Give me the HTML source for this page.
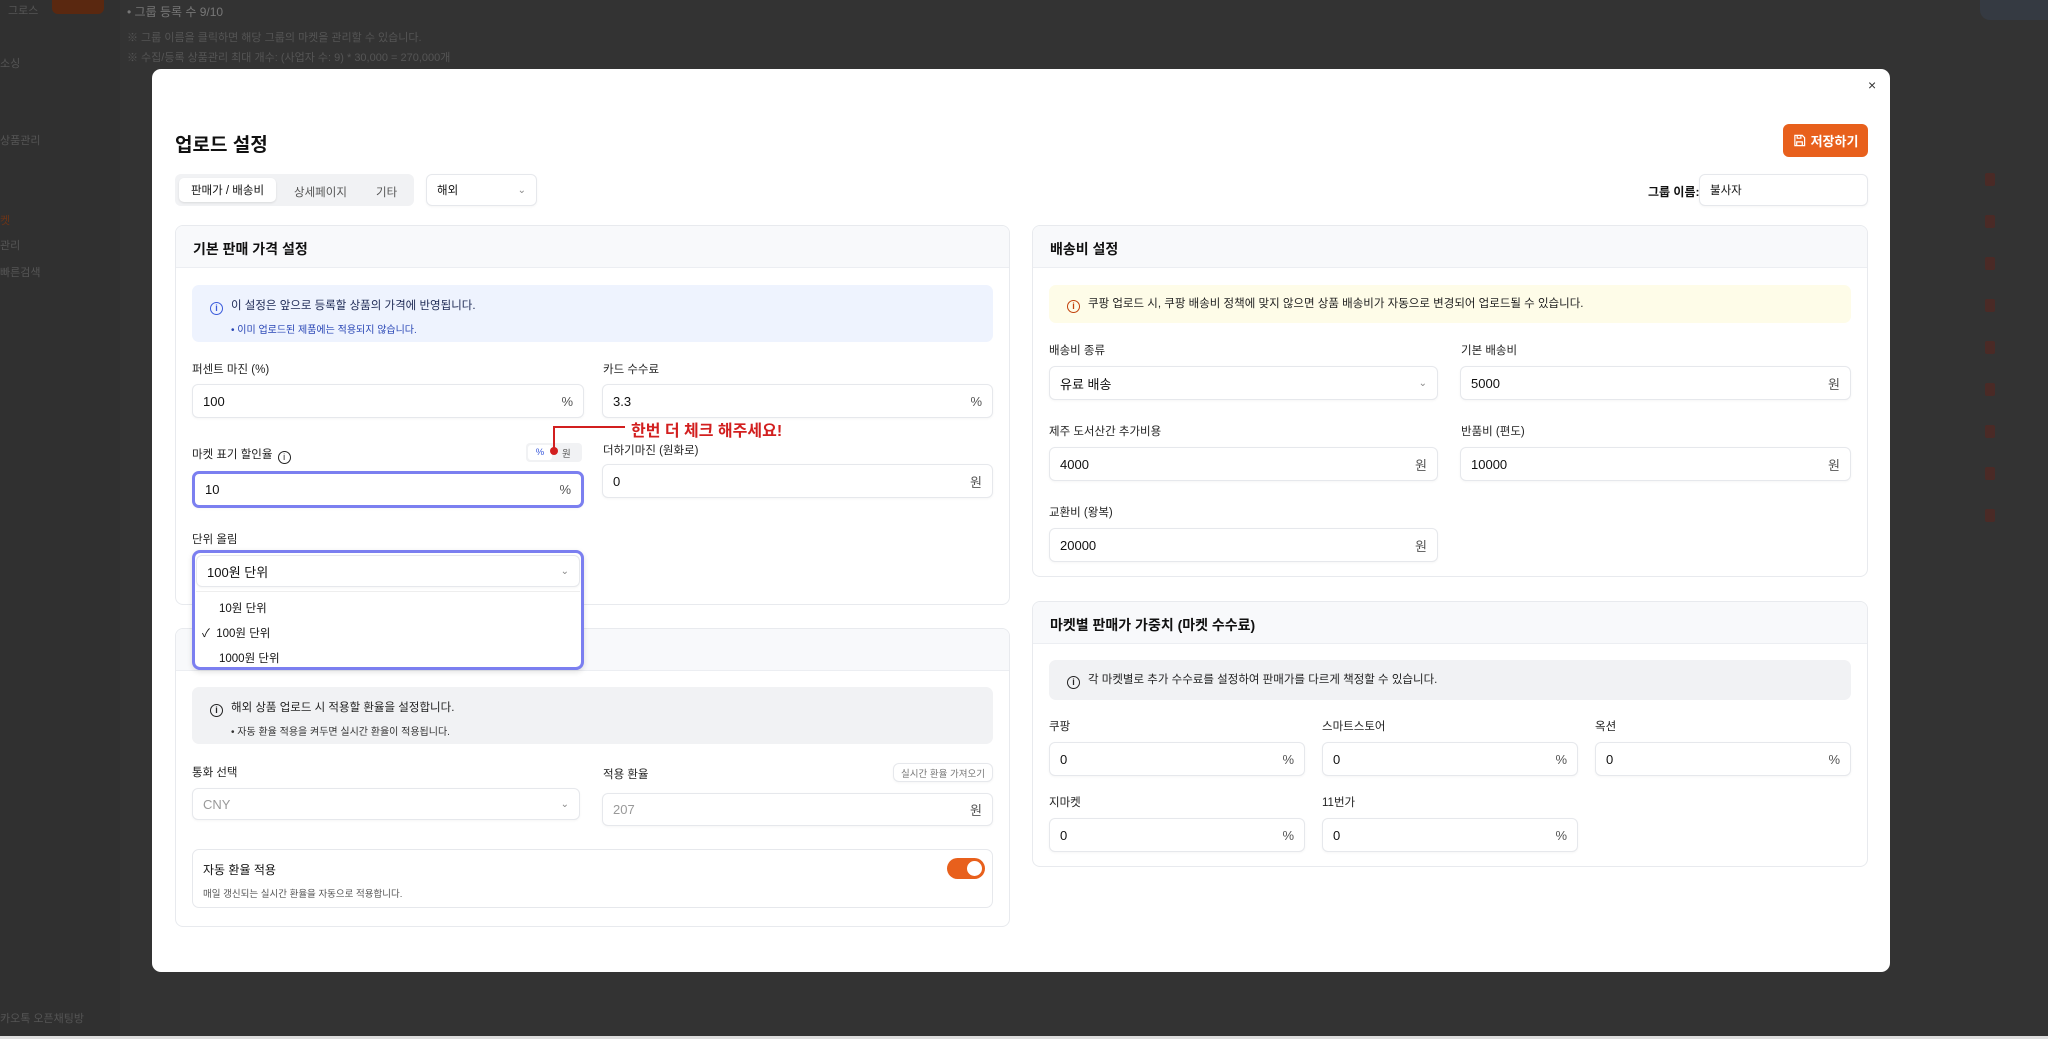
<!DOCTYPE html>
<html><head><meta charset="utf-8"><style>
*{box-sizing:border-box;margin:0;padding:0}
body{width:2048px;height:1039px;overflow:hidden;background:#333;font-family:"Liberation Sans","Noto Sans CJK KR",sans-serif;color:#111;position:relative}
.a{position:absolute}
.bgt{position:absolute;color:#555;font-size:11px}
.modal{left:152px;top:69px;width:1738px;height:903px;background:#fff;border-radius:9px}
.card{position:absolute;background:#fff;border:1px solid #e8eaee;border-radius:8px;overflow:hidden}
.card .hd{height:42px;background:#f8f9fb;border-bottom:1px solid #eceef2;font-size:14px;font-weight:bold;padding:13px 17px}
.inp{position:absolute;border:1px solid #e6e8ec;border-radius:6px;background:#fff;font-size:13px;padding:0 10px;display:flex;align-items:center;justify-content:space-between;box-shadow:0 1px 2px rgba(0,0,0,.04)}
.inp .u{color:#555;font-size:13px}
.lb{position:absolute;font-size:11.5px;color:#222}
.info{position:absolute;border-radius:7px;font-size:11.5px;padding:0 18px}
.ic{display:inline-block;width:13px;height:13px;border:1.3px solid currentColor;border-radius:50%;font-size:9px;line-height:10px;text-align:center;margin-right:8px;vertical-align:-2px;font-weight:bold}
.chev{color:#888;font-size:10px}
.tr{position:absolute;left:1985px;width:10px;height:13px;background:#4a2a26;border-radius:2px}
</style></head><body>
<div class="a" style="left:0;top:0;width:120px;height:1039px;background:#303030"></div>
<div class="bgt" style="left:8px;top:2px">그로스</div>
<div class="a" style="left:52px;top:0;width:52px;height:14px;background:#5a2810;border-radius:0 0 6px 6px"></div>
<div class="bgt" style="left:0;top:55px">소싱</div>
<div class="bgt" style="left:0;top:132px">상품관리</div>
<div class="bgt" style="left:0;top:212px;color:#6a3418">켓</div>
<div class="bgt" style="left:0;top:237px">관리</div>
<div class="bgt" style="left:0;top:264px">빠른검색</div>
<div class="bgt" style="left:0;top:1010px">카오톡 오픈채팅방</div>
<div class="bgt" style="left:127px;top:3px;color:#777;font-size:12px">• 그룹 등록 수 9/10</div>
<div class="bgt" style="left:127px;top:29px">※ 그룹 이름을 클릭하면 해당 그룹의 마켓을 관리할 수 있습니다.</div>
<div class="bgt" style="left:127px;top:49px">※ 수집/등록 상품관리 최대 개수: (사업자 수: 9) * 30,000 = 270,000개</div>
<div class="a" style="left:1980px;top:0;width:68px;height:20px;background:#353a42;border-radius:0 0 0 10px"></div>
<div class="a" style="left:0;top:1036px;width:2048px;height:3px;background:#ddd"></div>
<div class="tr" style="top:173px"></div><div class="tr" style="top:215px"></div><div class="tr" style="top:257px"></div><div class="tr" style="top:299px"></div><div class="tr" style="top:341px"></div><div class="tr" style="top:383px"></div><div class="tr" style="top:425px"></div><div class="tr" style="top:467px"></div><div class="tr" style="top:509px"></div>

<div class="a modal">
<div class="a" style="left:1716px;top:8px;font-size:14px;color:#333">×</div>
<div class="a" style="left:23px;top:61px;font-size:19px;font-weight:bold">업로드 설정</div>
<div class="a" style="left:1631px;top:55px;width:85px;height:33px;background:#e8601c;border-radius:6px;color:#fff;font-size:13px;font-weight:bold;display:flex;align-items:center;justify-content:center"><svg width="13" height="13" viewBox="0 0 14 14" style="margin-right:5px"><path d="M2 1.5h8l2.5 2.5v8.5h-10.5z M4.5 1.5v3h4v-3 M4 12.5v-4h6v4" fill="none" stroke="#fff" stroke-width="1.3"/></svg>저장하기</div>
<div class="a" style="left:23px;top:105px;width:239px;height:32px;background:#f1f2f4;border-radius:6px"></div>
<div class="a" style="left:27px;top:109px;width:97px;height:24px;background:#fff;border-radius:5px;box-shadow:0 1px 2px rgba(0,0,0,.1);font-size:11.5px;display:flex;align-items:center;justify-content:center">판매가 / 배송비</div>
<div class="a" style="left:142px;top:115px;font-size:11.5px;color:#555">상세페이지</div>
<div class="a" style="left:224px;top:115px;font-size:11.5px;color:#555">기타</div>
<div class="inp" style="left:274px;top:105px;width:111px;height:32px;font-size:11.5px"><span>해외</span><span class="chev">⌄</span></div>
<div class="a" style="left:1496px;top:114px;font-size:12px;font-weight:bold">그룹 이름:</div>
<div class="inp" style="left:1547px;top:105px;width:169px;height:32px;font-size:11.5px">불사자</div>
</div>

<div class="card" style="left:175px;top:225px;width:835px;height:380px"><div class="hd">기본 판매 가격 설정</div></div>
<div class="info" style="left:192px;top:285px;width:801px;height:57px;background:#eef3fe;color:#1e2a55;padding-top:12px"><span class="ic" style="color:#3b5bdb">i</span>이 설정은 앞으로 등록할 상품의 가격에 반영됩니다.<div style="font-size:10px;color:#2845b5;margin:6px 0 0 21px">• 이미 업로드된 제품에는 적용되지 않습니다.</div></div>
<div class="lb" style="left:192px;top:361px">퍼센트 마진 (%)</div>
<div class="inp" style="left:192px;top:384px;width:392px;height:34px"><span>100</span><span class="u">%</span></div>
<div class="lb" style="left:603px;top:361px">카드 수수료</div>
<div class="inp" style="left:602px;top:384px;width:391px;height:34px"><span>3.3</span><span class="u">%</span></div>
<div class="lb" style="left:192px;top:446px">마켓 표기 할인율 <span class="ic" style="font-weight:normal;margin-left:2px">i</span></div>
<div class="a" style="left:526px;top:443px;width:56px;height:19px;background:#f1f2f4;border-radius:4px;font-size:9.5px"><span class="a" style="left:2px;top:2px;width:24px;height:15px;background:#fff;border-radius:3px;color:#3b5bdb;text-align:center;line-height:15px">%</span><span class="a" style="left:36px;top:3px;color:#555">원</span></div>
<div class="inp" style="left:192px;top:471px;width:392px;height:37px;border:3px solid #7b7ff0;border-radius:7px"><span>10</span><span class="u">%</span></div>
<div class="lb" style="left:603px;top:442px">더하기마진 (원화로)</div>
<div class="inp" style="left:602px;top:464px;width:391px;height:34px"><span>0</span><span class="u">원</span></div>
<div class="a" style="left:553px;top:426px;width:72px;height:2px;background:#d21f1f"></div>
<div class="a" style="left:553px;top:426px;width:2px;height:26px;background:#d21f1f"></div>
<div class="a" style="left:550px;top:447px;width:8px;height:8px;border-radius:50%;background:#d21f1f"></div>
<div class="a" style="left:631px;top:417px;font-size:16px;font-weight:bold;color:#d21f1f">한번 더 체크 해주세요!</div>
<div class="lb" style="left:192px;top:531px">단위 올림</div>

<div class="card" style="left:175px;top:628px;width:835px;height:299px"><div class="hd">&nbsp;</div></div>
<div class="info" style="left:192px;top:687px;width:801px;height:57px;background:#f1f2f4;color:#222;padding-top:12px"><span class="ic">i</span>해외 상품 업로드 시 적용할 환율을 설정합니다.<div style="font-size:10px;color:#333;margin:6px 0 0 21px">• 자동 환율 적용을 켜두면 실시간 환율이 적용됩니다.</div></div>
<div class="lb" style="left:192px;top:764px">통화 선택</div>
<div class="inp" style="left:192px;top:788px;width:388px;height:32px;color:#999"><span>CNY</span><span class="chev">⌄</span></div>
<div class="lb" style="left:603px;top:766px">적용 환율</div>
<div class="inp" style="left:893px;top:763px;width:100px;height:19px;font-size:9.5px;color:#777;justify-content:center;padding:0">실시간 환율 가져오기</div>
<div class="inp" style="left:602px;top:793px;width:391px;height:33px;color:#999"><span>207</span><span class="u">원</span></div>
<div class="a" style="left:192px;top:849px;width:801px;height:59px;border:1px solid #e6e8ec;border-radius:7px"></div>
<div class="a" style="left:203px;top:861px;font-size:12px">자동 환율 적용</div>
<div class="a" style="left:203px;top:886px;font-size:9.5px;color:#555">매일 갱신되는 실시간 환율을 자동으로 적용합니다.</div>
<div class="a" style="left:947px;top:858px;width:38px;height:21px;border-radius:11px;background:#e8601c"><div class="a" style="right:3px;top:3px;width:15px;height:15px;border-radius:50%;background:#fff"></div></div>

<div class="a" style="left:192px;top:550px;width:392px;height:120px;border:3px solid #7b7ff0;border-radius:8px;background:#fff;box-shadow:0 2px 6px rgba(0,0,0,.12)">
 <div class="inp" style="left:1px;top:2px;width:384px;height:32px;font-size:13px"><span>100원 단위</span><span class="chev">⌄</span></div>
 <div class="a" style="left:1px;top:38px;width:384px;height:1px;background:#eee"></div>
 <div class="a" style="left:24px;top:47px;font-size:11.5px">10원 단위</div>
 <div class="a" style="left:7px;top:72px;font-size:11.5px">✓&nbsp; 100원 단위</div>
 <div class="a" style="left:24px;top:97px;font-size:11.5px">1000원 단위</div>
</div>

<div class="card" style="left:1032px;top:225px;width:836px;height:352px"><div class="hd">배송비 설정</div></div>
<div class="info" style="left:1049px;top:285px;width:802px;height:38px;background:#fefce8;color:#222;line-height:38px"><span class="ic" style="color:#c2410c">i</span>쿠팡 업로드 시, 쿠팡 배송비 정책에 맞지 않으면 상품 배송비가 자동으로 변경되어 업로드될 수 있습니다.</div>
<div class="lb" style="left:1049px;top:342px">배송비 종류</div>
<div class="inp" style="left:1049px;top:366px;width:389px;height:34px"><span>유료 배송</span><span class="chev">⌄</span></div>
<div class="lb" style="left:1461px;top:342px">기본 배송비</div>
<div class="inp" style="left:1460px;top:366px;width:391px;height:34px"><span>5000</span><span class="u">원</span></div>
<div class="lb" style="left:1049px;top:423px">제주 도서산간 추가비용</div>
<div class="inp" style="left:1049px;top:447px;width:389px;height:34px"><span>4000</span><span class="u">원</span></div>
<div class="lb" style="left:1461px;top:423px">반품비 (편도)</div>
<div class="inp" style="left:1460px;top:447px;width:391px;height:34px"><span>10000</span><span class="u">원</span></div>
<div class="lb" style="left:1049px;top:504px">교환비 (왕복)</div>
<div class="inp" style="left:1049px;top:528px;width:389px;height:34px"><span>20000</span><span class="u">원</span></div>

<div class="card" style="left:1032px;top:601px;width:836px;height:266px"><div class="hd">마켓별 판매가 가중치 (마켓 수수료)</div></div>
<div class="info" style="left:1049px;top:660px;width:802px;height:40px;background:#f1f2f4;color:#222;line-height:40px"><span class="ic">i</span>각 마켓별로 추가 수수료를 설정하여 판매가를 다르게 책정할 수 있습니다.</div>
<div class="lb" style="left:1049px;top:718px">쿠팡</div>
<div class="inp" style="left:1049px;top:742px;width:256px;height:34px"><span>0</span><span class="u">%</span></div>
<div class="lb" style="left:1322px;top:718px">스마트스토어</div>
<div class="inp" style="left:1322px;top:742px;width:256px;height:34px"><span>0</span><span class="u">%</span></div>
<div class="lb" style="left:1595px;top:718px">옥션</div>
<div class="inp" style="left:1595px;top:742px;width:256px;height:34px"><span>0</span><span class="u">%</span></div>
<div class="lb" style="left:1049px;top:794px">지마켓</div>
<div class="inp" style="left:1049px;top:818px;width:256px;height:34px"><span>0</span><span class="u">%</span></div>
<div class="lb" style="left:1322px;top:794px">11번가</div>
<div class="inp" style="left:1322px;top:818px;width:256px;height:34px"><span>0</span><span class="u">%</span></div>
</body></html>
